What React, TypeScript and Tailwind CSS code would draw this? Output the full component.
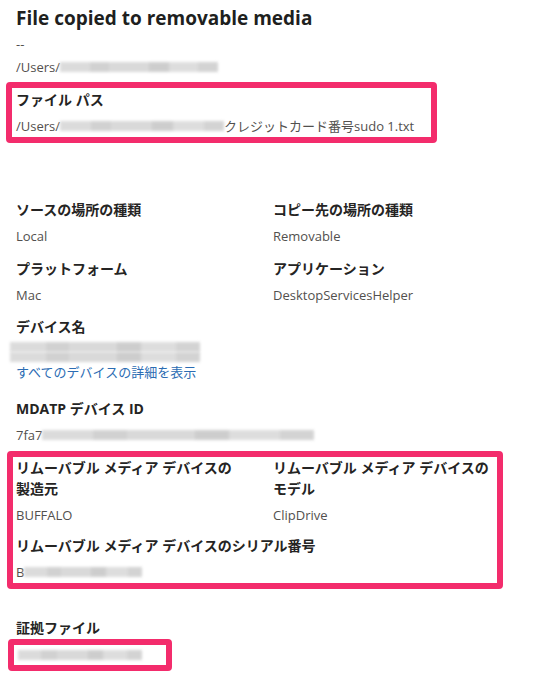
import React from "react";

const font = {
  fontFamily: '"Open Sans", "Noto Sans CJK JP", sans-serif',
};

// blurred (redacted) text placeholder
const Blur: React.FC<{ className: string; rows?: number }> = ({
  className,
  rows = 1,
}) => (
  <span className={`inline-flex flex-col justify-center align-middle ${className}`}>
    {Array.from({ length: rows }).map((_, i) => (
      <span key={i} className="flex h-[10px] w-full blur-[1.5px] opacity-90">
        <span className="flex-[3] bg-[#d8d8d8]" />
        <span className="flex-[2] bg-[#cdcdcd]" />
        <span className="flex-[4] bg-[#d5d5d5]" />
        <span className="flex-[2] bg-[#c8c8c8]" />
        <span className="flex-[3] bg-[#dadada]" />
        <span className="flex-[2] bg-[#cfcfcf]" />
      </span>
    ))}
  </span>
);

const Label: React.FC<{ children: React.ReactNode }> = ({ children }) => (
  <div className="text-[14px] leading-[21px] font-bold text-[#252423]">
    {children}
  </div>
);

const Value: React.FC<{ children: React.ReactNode; className?: string }> = ({
  children,
  className = "",
}) => (
  <div
    className={`mt-[6px] text-[13px] leading-[20px] text-[#52504e] whitespace-nowrap flex items-center ${className}`}
  >
    {children}
  </div>
);

export default function App() {
  return (
    <div className="w-[550px] h-[677px] bg-white overflow-hidden px-4 pt-[5px]" style={font}>
      <h1 className="text-[19px] leading-[26px] font-bold text-[#201f1e]">
        File copied to removable media
      </h1>
      <div className="mt-[3px] text-[13px] leading-[20px] text-[#52504e]">--</div>
      <div className="mt-[3px] text-[13px] leading-[20px] text-[#52504e] flex items-center">
        /Users/
        <Blur className="w-[158px] h-[20px]" />
      </div>

      <div className="mt-[5px] -ml-[10px] w-[431px] border-[6px] border-[#f32c6c] rounded-[4px] pl-1 pt-[1px] pb-[1px]">
        <Label>ファイル パス</Label>
        <Value className="mt-[4px]">
          /Users/
          <Blur className="w-[164px] h-[20px]" />
          クレジットカード番号sudo 1.txt
        </Value>
      </div>

      <div className="mt-[56px] grid grid-cols-[241px_241px] gap-x-4">
        <div className="mb-[12px]">
          <Label>ソースの場所の種類</Label>
          <Value>Local</Value>
        </div>
        <div className="mb-[12px]">
          <Label>コピー先の場所の種類</Label>
          <Value>Removable</Value>
        </div>
        <div className="mb-[11px]">
          <Label>プラットフォーム</Label>
          <Value>Mac</Value>
        </div>
        <div className="mb-[11px]">
          <Label>アプリケーション</Label>
          <Value>DesktopServicesHelper</Value>
        </div>
      </div>

      <div>
        <Label>デバイス名</Label>
        <div className="mt-[5px] -ml-[6px] h-[20px] flex">
          <Blur className="w-[190px] h-[20px]" rows={2} />
        </div>
        <div className="text-[13px] leading-[20px] text-[#2b6cb3]">
          すべてのデバイスの詳細を表示
        </div>
      </div>

      <div className="mt-[16px]">
        <Label>MDATP デバイス ID</Label>
        <Value>
          7fa7
          <Blur className="w-[272px] h-[20px]" />
        </Value>
      </div>

      <div className="mt-[6px] -ml-[9px] w-[496px] border-[6px] border-[#f32c6c] rounded-[4px] pl-[3px] pb-[1px]">
        <div className="grid grid-cols-[241px_241px] gap-x-4">
          <div>
            <Label>
              リムーバブル メディア デバイスの
              <br />
              製造元
            </Label>
            <Value>BUFFALO</Value>
          </div>
          <div>
            <Label>
              リムーバブル メディア デバイスの
              <br />
              モデル
            </Label>
            <Value>ClipDrive</Value>
          </div>
        </div>
        <div className="mt-[10px]">
          <Label>リムーバブル メディア デバイスのシリアル番号</Label>
          <Value>
            B
            <Blur className="w-[118px] h-[20px]" />
          </Value>
        </div>
      </div>

      <div className="mt-[28px]">
        <Label>証拠ファイル</Label>
        <div className="mt-[1px] -ml-[8px] w-[164px] h-[32px] border-[6px] border-[#f32c6c] rounded-[4px] flex items-center pl-[4px]">
          <Blur className="w-[124px] h-[20px]" />
        </div>
      </div>
    </div>
  );
}
